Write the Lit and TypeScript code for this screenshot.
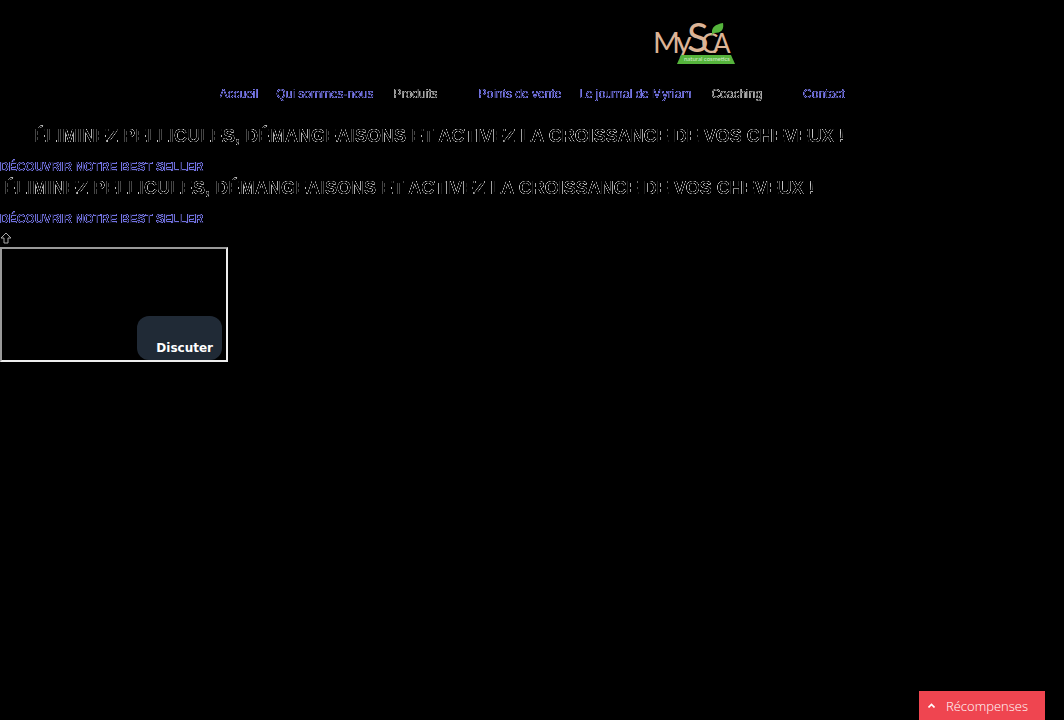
import { LitElement, html, css } from "lit";
import { customElement } from "lit/decorators.js";

const slides = [
  { title: "ÉLIMINEZ PELLICULES, DÉMANGEAISONS ET ACTIVEZ LA CROISSANCE DE VOS CHEVEUX !", listed: true },
  { title: "ÉLIMINEZ PELLICULES, DÉMANGEAISONS ET ACTIVEZ LA CROISSANCE DE VOS CHEVEUX !", listed: false },
];

@customElement("app-root")
export class AppRoot extends LitElement {
  static styles = css`
    :host {
      display: flex;
      flex-direction: column;
      min-height: 100vh;
      background: #000;
      color: #fff;
      font: 12px/18px "Liberation Sans", Arial, sans-serif;
    }
    .defs { position: absolute; width: 0; height: 0; }
    .fringe { filter: url(#fringe); }
    header { display: flex; flex-direction: column; align-items: center; padding-top: 10px; }
    .logo { display: block; margin-left: 328px; }
    .logo svg { display: block; }
    nav { display: flex; gap: 18px; margin-top: 14px; }
    a { color: #8282ff; text-decoration: none; }
    nav .fringe, .cta { filter: url(#fringe-strong); }
    button { font: inherit; color: inherit; background: none; border: 0; padding: 0; cursor: pointer; }
    nav .drop { padding: 0 23px 0 2px; color: #bbb; }
    main { padding-top: 19px; }
    h2 { margin: 0; font-size: 18px; line-height: 28px; font-weight: 700; white-space: nowrap; padding-left: 4px; }
    .listed { padding-left: 34px; }
    .cta { display: block; width: max-content; margin-top: 10px; line-height: 14px; font-weight: 700; }
    .top { display: block; width: 12px; height: 12px; margin-top: 6px; }
    .top svg { display: block; }
    .chat {
      box-sizing: border-box; width: 228px; height: 115px; margin-top: 3px;
      border: 2px inset #eee; display: flex; justify-content: flex-end; align-items: flex-end; padding-right: 4px;
    }
    .chat button {
      width: 85px; height: 44px; border-radius: 12px; background: #202a36; color: #fff;
      font: 700 12px/16px "DejaVu Sans", sans-serif; padding: 20px 9px 0 0; text-align: right;
    }
    .rewards {
      position: fixed; right: 19px; bottom: 0; width: 126px; height: 29px; background: #ef4550; color: #fff;
      display: flex; align-items: center; gap: 11px; padding: 0 9px; box-sizing: border-box;
      font: 300 13px/20px "Open Sans", sans-serif;
    }
  `;

  render() {
    return html`
      <svg class="defs" aria-hidden="true">
        <filter id="fringe" x="0" y="0" width="100%" height="100%" color-interpolation-filters="sRGB">
          <feComponentTransfer><feFuncA type="table" tableValues="0 0.8 0" /></feComponentTransfer>
        </filter>
        <filter id="fringe-strong" x="0" y="0" width="100%" height="100%" color-interpolation-filters="sRGB">
          <feComponentTransfer><feFuncA type="table" tableValues="0 0.9 0.9 0.7 0.1" /></feComponentTransfer>
        </filter>
      </svg>
      <header>
        <a class="logo" href="#" aria-label="MYSCA natural cosmetics">
          <svg width="84" height="61" viewBox="654 10 84 61">
            <text fill="#dcb496" font-family="Lato"><tspan x="653" y="53" font-size="29">M</tspan><tspan x="676" y="53" font-size="30">y</tspan><tspan x="687" y="52" font-size="40">S</tspan><tspan x="701" y="53" font-size="26">C</tspan><tspan x="713" y="53" font-size="26">A</tspan></text>
            <path d="M712 33Q711 25 723 23Q725 33 714 33L711 36Z" fill="#55b43c" />
            <path d="M681 55H731L735 64H677Z" fill="#55b43c" />
            <text x="684" y="61" font-size="6" fill="#d4edcc" font-family="Lato">natural cosmetics</text>
          </svg>
        </a>
        <nav>
          <a class="fringe" href="#">Accueil</a>
          <a class="fringe" href="#">Qui sommes-nous</a>
          <button class="fringe drop">Produits</button>
          <a class="fringe" href="#">Points de vente</a>
          <a class="fringe" href="#">Le journal de Myriam</a>
          <button class="fringe drop">Coaching</button>
          <a class="fringe" href="#">Contact</a>
        </nav>
      </header>
      <main>
        ${slides.map((s) => html`
          <section>
            <h2 class="fringe ${s.listed ? "listed" : ""}">${s.title}</h2>
            <a class="cta fringe" href="#">DÉCOUVRIR NOTRE BEST SELLER</a>
          </section>`)}
        <a class="top" href="#" aria-label="Haut de page">
          <svg width="12" height="12" viewBox="0 0 12 12"><path d="M6 1L11 6H8V11H4V6H1Z" fill="none" stroke="#aaa" /></svg>
        </a>
        <div class="chat"><button>Discuter</button></div>
      </main>
      <button class="rewards">
        <svg width="7" height="5" viewBox="0 0 7 5"><path d="M0.500 4.500L3.500 1.500L6.500 4.500" fill="none" stroke="#fff" stroke-width="1.600" /></svg>
        Récompenses
      </button>`;
  }
}
